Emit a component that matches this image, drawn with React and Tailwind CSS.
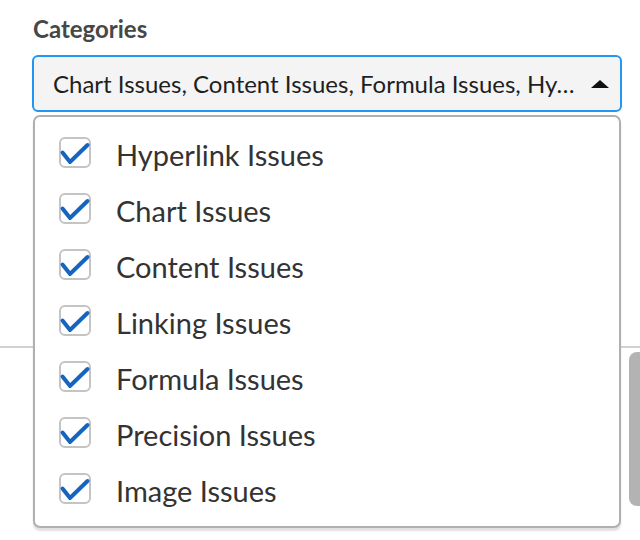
import React from "react";

const items = [
  "Hyperlink Issues",
  "Chart Issues",
  "Content Issues",
  "Linking Issues",
  "Formula Issues",
  "Precision Issues",
  "Image Issues",
];

function Check() {
  return (
    <span className="relative mb-[5px] flex h-[31px] w-[32px] shrink-0 items-center justify-center rounded-[6px] border-2 border-[#c4c4c4] bg-white">
      <svg width="32" height="32" viewBox="0 0 32 32" className="absolute left-[-2px] top-[-2px] overflow-visible">
        <path d="M3.5 15.5 L11 25 L28.5 8" fill="none" stroke="#1565c0" strokeWidth="4" strokeLinecap="round" strokeLinejoin="round" />
      </svg>
    </span>
  );
}

export default function App() {
  return (
    <div
      className="relative h-[540px] w-[640px] overflow-hidden bg-white"
      style={{ fontFamily: "Lato, 'Noto Sans', sans-serif" }}
    >
      <div className="flex flex-col pt-[15px]">
        <div className="pl-[33px] text-[24px] font-bold leading-[28px] text-[#474747]">Categories</div>
        <div className="relative ml-[32px] mt-[12px] w-[590px]">
          <div className="flex h-[57px] items-center justify-between rounded-[6px] border-2 border-[#2196f3] bg-[#f4f4f4] pl-[19px] pr-[11px]">
            <span className="truncate text-[24px] text-[#1f1f1f]">
              Chart Issues, Content Issues, Formula Issues, Hy…
            </span>
            <svg width="18" height="8" viewBox="0 0 18 8" className="ml-[14px] shrink-0">
              <path d="M0 8 L9 0 L18 8 Z" fill="#111" />
            </svg>
          </div>
          <div className="absolute left-[1px] top-[60px] z-10 h-[413px] w-[588px] rounded-[7px] border-2 border-[#b0b0b0] bg-white pt-[10px] shadow-[0_3px_2px_rgba(0,0,0,0.12)]">
            <div className="flex flex-col">
              {items.map((t) => (
                <div key={t} className="flex h-[56px] items-center gap-[25px] pl-[24px]">
                  <Check />
                  <span className="text-[29px] leading-[32px] text-[#333333]">{t}</span>
                </div>
              ))}
            </div>
          </div>
        </div>
        <div className="mt-[234px] h-[2px] w-full bg-[#d2d2d2]" />
        <div className="mt-[4px] flex justify-end">
          <div className="h-[154px] w-[11px] rounded-l-[8px] bg-[#b3b3b3]" />
        </div>
      </div>
    </div>
  );
}
